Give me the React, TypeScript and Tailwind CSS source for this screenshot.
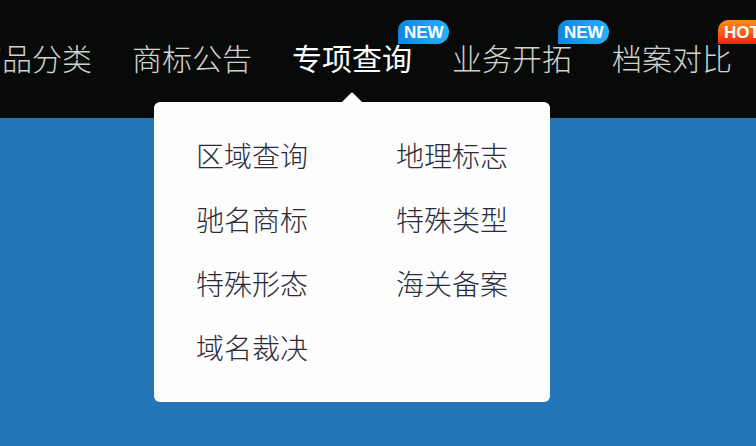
import React from "react";
import { clsx } from "clsx";

type Badge = "new" | "hot";

interface NavItem {
  label: string;
  badge?: Badge;
  children?: string[];
}

const navItems: NavItem[] = [
  { label: "商品分类" },
  { label: "商标公告" },
  {
    label: "专项查询",
    badge: "new",
    children: [
      "区域查询",
      "地理标志",
      "驰名商标",
      "特殊类型",
      "特殊形态",
      "海关备案",
      "域名裁决",
    ],
  },
  { label: "业务开拓", badge: "new" },
  { label: "档案对比", badge: "hot" },
];

const NavBadge: React.FC<{ type: Badge }> = ({ type }) => (
  <span
    className={clsx(
      "absolute left-[106px] top-5 flex h-6 w-[51px] items-center rounded-r-xl rounded-tl-[10px] pl-[6px] font-['Liberation_Sans',sans-serif] text-[17px] font-bold leading-none text-white",
      type === "new"
        ? "bg-linear-to-r from-[#1583dc] to-[#25b4fa]"
        : "bg-linear-to-t from-[#ee1c0c] to-[#ff8a1c]"
    )}
  >
    {type === "new" ? "NEW" : "HOT"}
  </span>
);

const Dropdown: React.FC<{ items: string[] }> = ({ items }) => (
  <div className="absolute left-1/2 top-[102px] w-[396px] -translate-x-1/2 rounded-md bg-[#fdfdfe] pb-[23px] pt-[21px]">
    {/* Pointer towards the active item */}
    <svg
      className="absolute bottom-full left-1/2 h-[10px] w-5 -translate-x-1/2"
      viewBox="0 0 20 10"
      fill="#fdfdfe"
    >
      <path d="M0 10 L9 1 Q10 0 11 1 L20 10 Z" />
    </svg>

    <ul className="grid grid-cols-2 gap-x-1">
      {items.map((item) => (
        <li key={item} className="text-center">
          <a href="#" className="block text-[28px] leading-[64px] text-[#2b2b38]">
            {item}
          </a>
        </li>
      ))}
    </ul>
  </div>
);

export default function App() {
  return (
    <div className="min-h-screen overflow-hidden bg-[#2275b6] font-['Noto_Sans_CJK_SC',sans-serif] font-light">
      <header className="bg-[#080a0a]">
        {/* The bar runs off both sides of narrow windows */}
        <nav className="-ml-7">
          <ul className="flex gap-10">
            {navItems.map(({ label, badge, children }) => (
              <li key={label} className="relative shrink-0">
                <a
                  href="#"
                  className={clsx(
                    "block whitespace-nowrap pb-1 text-3xl/[114px]",
                    children ? "font-normal text-white" : "text-[#d2d2cc]"
                  )}
                >
                  {label}
                </a>
                {badge && <NavBadge type={badge} />}
                {children && <Dropdown items={children} />}
              </li>
            ))}
          </ul>
        </nav>
      </header>
    </div>
  );
}
